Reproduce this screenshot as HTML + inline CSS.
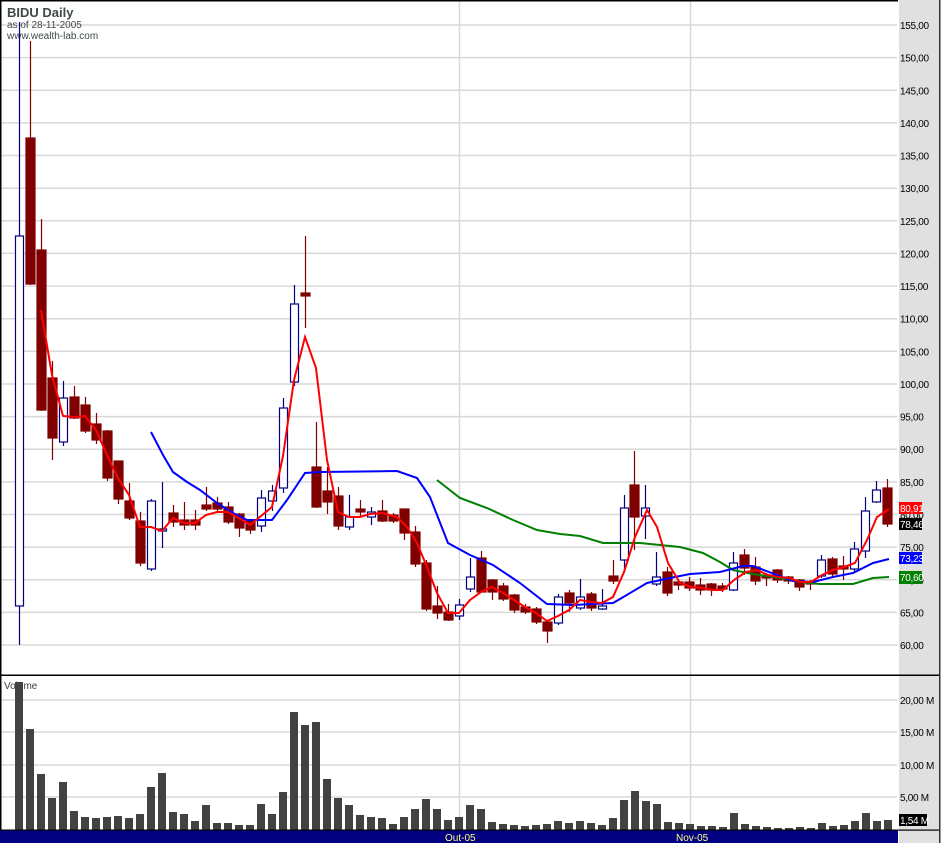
<!DOCTYPE html>
<html><head><meta charset="utf-8"><style>
html,body{margin:0;padding:0;background:#fff;}
svg{display:block;font-family:"Liberation Sans",sans-serif;}
</style></head><body>
<svg width="942" height="843" viewBox="0 0 942 843" xmlns="http://www.w3.org/2000/svg">
<rect x="0" y="0" width="942" height="843" fill="#fff"/>
<rect x="899" y="0" width="40" height="843" fill="#e0e0e0"/>
<rect x="939" y="0" width="1.5" height="843" fill="#333"/>
<g stroke="#d8d8d8" stroke-width="1.5">
<line x1="0" x2="897" y1="25" y2="25"/><line x1="0" x2="897" y1="57.6" y2="57.6"/><line x1="0" x2="897" y1="90.3" y2="90.3"/><line x1="0" x2="897" y1="122.9" y2="122.9"/><line x1="0" x2="897" y1="155.5" y2="155.5"/><line x1="0" x2="897" y1="188.2" y2="188.2"/><line x1="0" x2="897" y1="220.8" y2="220.8"/><line x1="0" x2="897" y1="253.4" y2="253.4"/><line x1="0" x2="897" y1="286.1" y2="286.1"/><line x1="0" x2="897" y1="318.7" y2="318.7"/><line x1="0" x2="897" y1="351.3" y2="351.3"/><line x1="0" x2="897" y1="384" y2="384"/><line x1="0" x2="897" y1="416.6" y2="416.6"/><line x1="0" x2="897" y1="449.2" y2="449.2"/><line x1="0" x2="897" y1="481.9" y2="481.9"/><line x1="0" x2="897" y1="514.5" y2="514.5"/><line x1="0" x2="897" y1="547.1" y2="547.1"/><line x1="0" x2="897" y1="579.8" y2="579.8"/><line x1="0" x2="897" y1="612.4" y2="612.4"/><line x1="0" x2="897" y1="645" y2="645"/>
<line x1="0" x2="897" y1="700" y2="700"/><line x1="0" x2="897" y1="732" y2="732"/><line x1="0" x2="897" y1="765" y2="765"/><line x1="0" x2="897" y1="797" y2="797"/>
<line x1="459.5" x2="459.5" y1="0" y2="830"/><line x1="690.5" x2="690.5" y1="0" y2="830"/>
</g>
<g font-size="10" letter-spacing="-0.3" fill="#000">
<text x="900" y="29">155,00</text><text x="900" y="61.6">150,00</text><text x="900" y="94.3">145,00</text><text x="900" y="126.9">140,00</text><text x="900" y="159.5">135,00</text><text x="900" y="192.2">130,00</text><text x="900" y="224.8">125,00</text><text x="900" y="257.4">120,00</text><text x="900" y="290.1">115,00</text><text x="900" y="322.7">110,00</text><text x="900" y="355.3">105,00</text><text x="900" y="388">100,00</text><text x="900" y="420.6">95,00</text><text x="900" y="453.2">90,00</text><text x="900" y="485.9">85,00</text><text x="900" y="518.5">80,00</text><text x="900" y="551.1">75,00</text><text x="900" y="583.8">70,00</text><text x="900" y="616.4">65,00</text><text x="900" y="649">60,00</text>
<text x="900" y="704">20,00 M</text><text x="900" y="736">15,00 M</text><text x="900" y="769">10,00 M</text><text x="900" y="801">5,00 M</text>
</g>
<rect x="0" y="0" width="898" height="1.5" fill="#000"/>
<rect x="0" y="0" width="1.5" height="843" fill="#000"/>
<rect x="0" y="674.5" width="939" height="1.5" fill="#000"/>
<text x="7" y="17" font-size="13" font-weight="bold" fill="#404848">BIDU Daily</text>
<text x="7" y="28" font-size="10" fill="#404848">as of 28-11-2005</text>
<text x="7" y="39" font-size="10" fill="#404848">www.wealth-lab.com</text>
<g fill="#424242">
<rect x="15" y="682" width="8" height="148"/><rect x="26" y="729" width="8" height="101"/><rect x="37" y="774" width="8" height="56"/><rect x="48" y="798" width="8" height="32"/><rect x="59" y="782" width="8" height="48"/><rect x="70" y="811" width="8" height="19"/><rect x="81" y="817" width="8" height="13"/><rect x="92" y="818" width="8" height="12"/><rect x="103" y="817" width="8" height="13"/><rect x="114" y="816" width="8" height="14"/><rect x="125" y="818" width="8" height="12"/><rect x="136" y="814" width="8" height="16"/><rect x="147" y="787" width="8" height="43"/><rect x="158" y="773" width="8" height="57"/><rect x="169" y="812" width="8" height="18"/><rect x="180" y="814" width="8" height="16"/><rect x="191" y="821" width="8" height="9"/><rect x="202" y="805" width="8" height="25"/><rect x="213" y="823" width="8" height="7"/><rect x="224" y="823" width="8" height="7"/><rect x="235" y="825" width="8" height="5"/><rect x="246" y="825" width="8" height="5"/><rect x="257" y="804" width="8" height="26"/><rect x="268" y="814" width="8" height="16"/><rect x="279" y="792" width="8" height="38"/><rect x="290" y="712" width="8" height="118"/><rect x="301" y="725" width="8" height="105"/><rect x="312" y="722" width="8" height="108"/><rect x="323" y="779" width="8" height="51"/><rect x="334" y="798" width="8" height="32"/><rect x="345" y="805" width="8" height="25"/><rect x="356" y="815" width="8" height="15"/><rect x="367" y="817" width="8" height="13"/><rect x="378" y="818" width="8" height="12"/><rect x="389" y="824" width="8" height="6"/><rect x="400" y="817" width="8" height="13"/><rect x="411" y="809" width="8" height="21"/><rect x="422" y="799" width="8" height="31"/><rect x="433" y="809" width="8" height="21"/><rect x="444" y="820" width="8" height="10"/><rect x="455" y="817" width="8" height="13"/><rect x="466" y="805" width="8" height="25"/><rect x="477" y="809" width="8" height="21"/><rect x="488" y="822" width="8" height="8"/><rect x="499" y="824" width="8" height="6"/><rect x="510" y="825" width="8" height="5"/><rect x="521" y="826" width="8" height="4"/><rect x="532" y="825" width="8" height="5"/><rect x="543" y="824" width="8" height="6"/><rect x="554" y="821" width="8" height="9"/><rect x="565" y="823" width="8" height="7"/><rect x="576" y="821" width="8" height="9"/><rect x="587" y="823" width="8" height="7"/><rect x="598" y="825" width="8" height="5"/><rect x="609" y="818" width="8" height="12"/><rect x="620" y="800" width="8" height="30"/><rect x="631" y="791" width="8" height="39"/><rect x="642" y="801" width="8" height="29"/><rect x="653" y="804" width="8" height="26"/><rect x="664" y="822" width="8" height="8"/><rect x="675" y="823" width="8" height="7"/><rect x="686" y="824" width="8" height="6"/><rect x="697" y="826" width="8" height="4"/><rect x="708" y="826" width="8" height="4"/><rect x="719" y="827" width="8" height="3"/><rect x="730" y="813" width="8" height="17"/><rect x="741" y="824" width="8" height="6"/><rect x="752" y="826" width="8" height="4"/><rect x="763" y="827" width="8" height="3"/><rect x="774" y="828" width="8" height="2"/><rect x="785" y="828" width="8" height="2"/><rect x="796" y="827" width="8" height="3"/><rect x="807" y="828" width="8" height="2"/><rect x="818" y="823" width="8" height="7"/><rect x="829" y="826" width="8" height="4"/><rect x="840" y="825" width="8" height="5"/><rect x="851" y="821" width="8" height="9"/><rect x="862" y="813" width="8" height="17"/><rect x="873" y="821" width="8" height="9"/><rect x="884" y="820" width="8" height="10"/>
</g>
<text x="4" y="689" font-size="10" fill="#404040">Volume</text>
<rect x="0" y="830" width="898" height="13" fill="#000080"/>
<rect x="0" y="829.5" width="939" height="1.2" fill="#000"/>
<text x="445" y="841" font-size="10" fill="#ffff80">Out-05</text>
<text x="676" y="841" font-size="10" fill="#ffff80">Nov-05</text>
<rect x="899" y="814" width="28" height="12" fill="#000"/>
<text x="900" y="824" font-size="10" letter-spacing="-0.3" fill="#fff">1,54 M</text>
<g stroke-width="1.2">
<g stroke="#800000" fill="#800000">
<line x1="30.5" x2="30.5" y1="41" y2="285"/><rect x="26" y="138" width="9" height="146"/>
<line x1="41.5" x2="41.5" y1="219" y2="411"/><rect x="37" y="250" width="9" height="160"/>
<line x1="52.5" x2="52.5" y1="361" y2="460"/><rect x="48" y="378" width="9" height="60"/>
<line x1="74.5" x2="74.5" y1="386" y2="419"/><rect x="70" y="397" width="9" height="21"/>
<line x1="85.5" x2="85.5" y1="397" y2="433"/><rect x="81" y="405" width="9" height="26"/>
<line x1="96.5" x2="96.5" y1="413" y2="444"/><rect x="92" y="424" width="9" height="16"/>
<line x1="107.5" x2="107.5" y1="430" y2="481"/><rect x="103" y="431" width="9" height="47"/>
<line x1="118.5" x2="118.5" y1="461" y2="504"/><rect x="114" y="461" width="9" height="38"/>
<line x1="129.5" x2="129.5" y1="483" y2="520"/><rect x="125" y="501" width="9" height="17"/>
<line x1="140.5" x2="140.5" y1="512" y2="566"/><rect x="136" y="521" width="9" height="42"/>
<line x1="173.5" x2="173.5" y1="505" y2="527"/><rect x="169" y="513" width="9" height="9"/>
<line x1="184.5" x2="184.5" y1="502" y2="530"/><rect x="180" y="520" width="9" height="5"/>
<line x1="195.5" x2="195.5" y1="510" y2="530"/><rect x="191" y="520" width="9" height="5"/>
<line x1="206.5" x2="206.5" y1="487" y2="511"/><rect x="202" y="505" width="9" height="4"/>
<line x1="217.5" x2="217.5" y1="497" y2="511"/><rect x="213" y="503" width="9" height="6"/>
<line x1="228.5" x2="228.5" y1="502" y2="524"/><rect x="224" y="507" width="9" height="15"/>
<line x1="239.5" x2="239.5" y1="513" y2="537"/><rect x="235" y="514" width="9" height="14"/>
<line x1="250.5" x2="250.5" y1="520" y2="534"/><rect x="246" y="521" width="9" height="9"/>
<line x1="305.5" x2="305.5" y1="236" y2="328"/><rect x="301" y="293" width="9" height="3"/>
<line x1="316.5" x2="316.5" y1="422" y2="508"/><rect x="312" y="467" width="9" height="40"/>
<line x1="327.5" x2="327.5" y1="467" y2="514"/><rect x="323" y="491" width="9" height="11"/>
<line x1="338.5" x2="338.5" y1="487" y2="530"/><rect x="334" y="496" width="9" height="30"/>
<line x1="360.5" x2="360.5" y1="500" y2="517"/><rect x="356" y="509" width="9" height="3"/>
<line x1="382.5" x2="382.5" y1="500" y2="522"/><rect x="378" y="511" width="9" height="10"/>
<line x1="393.5" x2="393.5" y1="513" y2="523"/><rect x="389" y="515" width="9" height="6"/>
<line x1="404.5" x2="404.5" y1="509" y2="540"/><rect x="400" y="509" width="9" height="24"/>
<line x1="415.5" x2="415.5" y1="526" y2="567"/><rect x="411" y="532" width="9" height="32"/>
<line x1="426.5" x2="426.5" y1="560" y2="611"/><rect x="422" y="563" width="9" height="46"/>
<line x1="437.5" x2="437.5" y1="586" y2="619"/><rect x="433" y="606" width="9" height="7"/>
<line x1="448.5" x2="448.5" y1="604" y2="621"/><rect x="444" y="612" width="9" height="8"/>
<line x1="481.5" x2="481.5" y1="551" y2="592"/><rect x="477" y="558" width="9" height="34"/>
<line x1="492.5" x2="492.5" y1="579" y2="600"/><rect x="488" y="580" width="9" height="12"/>
<line x1="503.5" x2="503.5" y1="583" y2="601"/><rect x="499" y="586" width="9" height="13"/>
<line x1="514.5" x2="514.5" y1="594" y2="613"/><rect x="510" y="595" width="9" height="15"/>
<line x1="525.5" x2="525.5" y1="604" y2="614"/><rect x="521" y="607" width="9" height="5"/>
<line x1="536.5" x2="536.5" y1="607" y2="624"/><rect x="532" y="609" width="9" height="13"/>
<line x1="547.5" x2="547.5" y1="622" y2="643"/><rect x="543" y="622" width="9" height="9"/>
<line x1="569.5" x2="569.5" y1="590" y2="612"/><rect x="565" y="593" width="9" height="10"/>
<line x1="591.5" x2="591.5" y1="592" y2="611"/><rect x="587" y="594" width="9" height="14"/>
<line x1="613.5" x2="613.5" y1="560" y2="584"/><rect x="609" y="576" width="9" height="5"/>
<line x1="634.5" x2="634.5" y1="451" y2="550"/><rect x="630" y="485" width="9" height="32"/>
<line x1="667.5" x2="667.5" y1="567" y2="596"/><rect x="663" y="572" width="9" height="21"/>
<line x1="678.5" x2="678.5" y1="580" y2="590"/><rect x="674" y="582" width="9" height="3"/>
<line x1="689.5" x2="689.5" y1="577" y2="591"/><rect x="685" y="582" width="9" height="6"/>
<line x1="700.5" x2="700.5" y1="578" y2="595"/><rect x="696" y="585" width="9" height="5"/>
<line x1="711.5" x2="711.5" y1="583" y2="596"/><rect x="707" y="584" width="9" height="6"/>
<line x1="722.5" x2="722.5" y1="583" y2="592"/><rect x="718" y="586" width="9" height="3"/>
<line x1="744.5" x2="744.5" y1="549" y2="575"/><rect x="740" y="555" width="9" height="13"/>
<line x1="755.5" x2="755.5" y1="557" y2="585"/><rect x="751" y="567" width="9" height="14"/>
<line x1="766.5" x2="766.5" y1="573" y2="586"/><rect x="762" y="575" width="9" height="3"/>
<line x1="777.5" x2="777.5" y1="569" y2="583"/><rect x="773" y="570" width="9" height="10"/>
<line x1="788.5" x2="788.5" y1="576" y2="584"/><rect x="784" y="577" width="9" height="4"/>
<line x1="799.5" x2="799.5" y1="579" y2="591"/><rect x="795" y="580" width="9" height="7"/>
<line x1="810.5" x2="810.5" y1="580" y2="590"/><rect x="806" y="582" width="9" height="2"/>
<line x1="832.5" x2="832.5" y1="557" y2="577"/><rect x="828" y="559" width="9" height="15"/>
<line x1="843.5" x2="843.5" y1="556" y2="580"/><rect x="839" y="566" width="9" height="3"/>
<line x1="887.5" x2="887.5" y1="479" y2="527"/><rect x="883" y="488" width="9" height="36"/>
</g>
<g stroke="#000080" fill="#fff">
<line x1="19.5" x2="19.5" y1="22" y2="645"/><rect x="15.5" y="236" width="8" height="370"/>
<line x1="63.5" x2="63.5" y1="381" y2="446"/><rect x="59.5" y="398" width="8" height="44"/>
<line x1="151.5" x2="151.5" y1="499" y2="571"/><rect x="147.5" y="501" width="8" height="68"/>
<line x1="162.5" x2="162.5" y1="482" y2="548"/><rect x="158.5" y="529" width="8" height="2"/>
<line x1="261.5" x2="261.5" y1="490" y2="532"/><rect x="257.5" y="498" width="8" height="28"/>
<line x1="272.5" x2="272.5" y1="485" y2="511"/><rect x="268.5" y="491" width="8" height="10"/>
<line x1="283.5" x2="283.5" y1="398" y2="493"/><rect x="279.5" y="408" width="8" height="80"/>
<line x1="294.5" x2="294.5" y1="285" y2="386"/><rect x="290.5" y="304" width="8" height="78"/>
<line x1="349.5" x2="349.5" y1="495" y2="530"/><rect x="345.5" y="517" width="8" height="10"/>
<line x1="371.5" x2="371.5" y1="507" y2="525"/><rect x="367.5" y="512" width="8" height="5"/>
<line x1="459.5" x2="459.5" y1="599" y2="620"/><rect x="455.5" y="605" width="8" height="11"/>
<line x1="470.5" x2="470.5" y1="558" y2="592"/><rect x="466.5" y="577" width="8" height="12"/>
<line x1="558.5" x2="558.5" y1="594" y2="625"/><rect x="554.5" y="597" width="8" height="26"/>
<line x1="580.5" x2="580.5" y1="579" y2="610"/><rect x="576.5" y="597" width="8" height="11"/>
<line x1="602.5" x2="602.5" y1="589" y2="610"/><rect x="598.5" y="606" width="8" height="3"/>
<line x1="624.5" x2="624.5" y1="495" y2="572"/><rect x="620.5" y="508" width="8" height="52"/>
<line x1="645.5" x2="645.5" y1="485" y2="539"/><rect x="641.5" y="508" width="8" height="8"/>
<line x1="656.5" x2="656.5" y1="552" y2="586"/><rect x="652.5" y="577" width="8" height="7"/>
<line x1="733.5" x2="733.5" y1="552" y2="591"/><rect x="729.5" y="563" width="8" height="27"/>
<line x1="821.5" x2="821.5" y1="555" y2="578"/><rect x="817.5" y="560" width="8" height="16"/>
<line x1="854.5" x2="854.5" y1="542" y2="573"/><rect x="850.5" y="549" width="8" height="20"/>
<line x1="865.5" x2="865.5" y1="497" y2="558"/><rect x="861.5" y="511" width="8" height="40"/>
<line x1="876.5" x2="876.5" y1="481" y2="503"/><rect x="872.5" y="490" width="8" height="12"/>
</g>
</g>
<polyline fill="none" stroke="#008000" stroke-width="2" points="437,480 460,498 487,508 513,520 537,530 560,534 580,536 603,543 640,543 680,547 703,553 720,562 733,570 753,574 780,578 800,582 820,584 853,584 873,578 889,577"/>
<polyline fill="none" stroke="#0000ff" stroke-width="2" points="151,432 163,455 173,472 187,482 200,490 217,503 233,513 247,520 272,520 287,500 305,473 320,472 397,471 417,478 430,497 448,543 470,555 493,565 520,583 547,604 573,605 613,603 620,599 647,583 670,578 690,574 720,572 743,566 753,566 777,575 793,581 813,582 833,577 853,573 873,563 889,559"/>
<polyline fill="none" stroke="#ff0000" stroke-width="2" points="41,310 52,375 63,416 74,417 85,416 96,430 107,455 118,478 129,495 140,527 151,527 162,531 173,518 184,523 195,523 206,515 217,512 228,512 239,518 250,525 261,516 272,507 283,456 294,380 305,337 316,368 327,460 338,512 349,517 360,517 370,514 383,513 397,517 407,527 417,543 427,567 437,593 448,613 459,613 470,600 481,592 492,587 503,593 514,600 525,607 536,613 547,621 558,616 569,610 580,600 591,602 602,603 613,597 624,572 635,537 647,510 657,527 668,563 680,583 691,587 702,588 712,590 723,590 734,580 746,572 757,570 768,575 778,577 789,578 800,582 811,582 822,575 833,570 844,567 855,563 867,540 877,517 889,509"/>
<rect x="899" y="502" width="23" height="12" fill="#ff0000"/><text x="900" y="512" font-size="10" letter-spacing="-0.3" fill="#fff">80,91</text>
<rect x="899" y="518" width="23" height="12" fill="#000"/><text x="900" y="528" font-size="10" letter-spacing="-0.3" fill="#fff">78,46</text>
<rect x="899" y="552" width="23" height="12" fill="#0000ff"/><text x="900" y="562" font-size="10" letter-spacing="-0.3" fill="#fff">73,23</text>
<rect x="899" y="571" width="23" height="13" fill="#008000"/><text x="900" y="581" font-size="10" letter-spacing="-0.3" fill="#fff">70,60</text>
</svg>
</body></html>
